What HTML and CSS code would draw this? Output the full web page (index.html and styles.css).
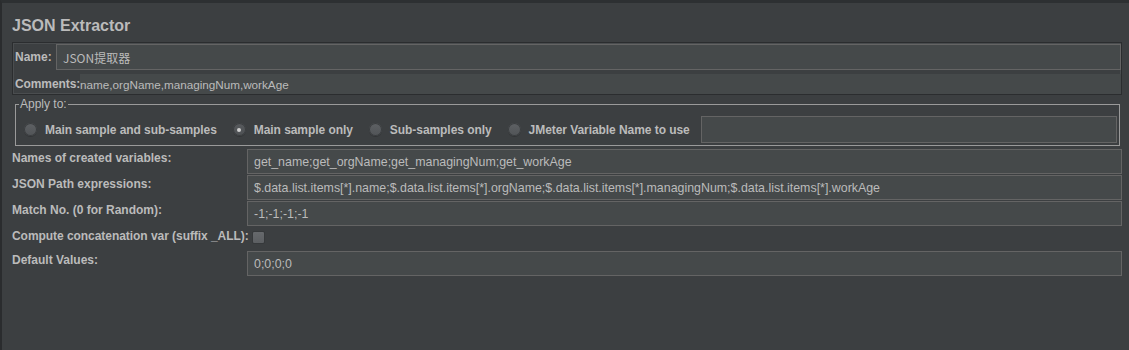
FILE: index.html
```html
<!DOCTYPE html>
<html lang="en">
<head>
<meta charset="utf-8">
<title>JSON Extractor</title>
<link rel="stylesheet" href="styles.css">
</head>
<body>
<div class="frame">
  <h1 class="title">JSON Extractor</h1>

  <div class="name-panel">
    <div class="name-row">
      <span class="label">Name:</span>
      <div class="field name-field">JSON提取器</div>
    </div>
    <div class="comments-row">
      <span class="label">Comments:</span>
      <div class="comments-field">name,orgName,managingNum,workAge</div>
    </div>
  </div>

  <fieldset class="apply">
    <legend class="apply-legend">Apply to:</legend>
    <div class="radio-row">
      <label class="option"><span class="radio"></span><span class="label">Main sample and sub-samples</span></label>
      <label class="option"><span class="radio checked"></span><span class="label">Main sample only</span></label>
      <label class="option"><span class="radio"></span><span class="label">Sub-samples only</span></label>
      <label class="option"><span class="radio"></span><span class="label">JMeter Variable Name to use</span></label>
      <div class="field var-field"></div>
    </div>
  </fieldset>

  <div class="form-grid">
    <span class="label row-label">Names of created variables:</span>
    <div class="field">get_name;get_orgName;get_managingNum;get_workAge</div>

    <span class="label row-label">JSON Path expressions:</span>
    <div class="field">$.data.list.items[*].name;$.data.list.items[*].orgName;$.data.list.items[*].managingNum;$.data.list.items[*].workAge</div>

    <span class="label row-label">Match No. (0 for Random):</span>
    <div class="field">-1;-1;-1;-1</div>

    <span class="label row-label tight">Compute concatenation var (suffix _ALL):</span>
    <div class="check-cell"><span class="checkbox"></span></div>

    <span class="label row-label">Default Values:</span>
    <div class="field">0;0;0;0</div>
  </div>
</div>
</body>
</html>
```

FILE: styles.css
```css
* {
  box-sizing: border-box;
}

html, body {
  margin: 0;
  padding: 0;
  background: #3c3f41;
}

body {
  font-family: "Liberation Sans", Arial, sans-serif;
  font-size: 12px;
  color: #bbbbbb;
}

.frame {
  min-height: 350px;
  border-top: 3px solid #2d3032;
  border-left: 2px solid #2a2c2e;
  padding: 13px 7px 0 10px;
}

.title {
  margin: 0 0 7px 0;
  font-size: 16px;
  line-height: 19px;
  font-weight: bold;
  color: #bbbbbb;
}

.label {
  font-weight: bold;
  line-height: 14px;
  white-space: nowrap;
}

.tight {
  letter-spacing: -0.05px;
}

/* Name / comments panel */
.name-panel {
  border: 1px solid #2b2d2f;
  box-shadow: inset 0 0 0 1px #4a4d4f;
  padding: 1px 0 0 2px;
  display: flex;
  flex-direction: column;
  gap: 4px;
}

.name-row {
  display: flex;
  align-items: center;
  height: 26px;
}

.name-row .label {
  width: 41px;
}

.field {
  background: #45494a;
  border: 1px solid #646464;
  height: 25px;
  padding: 0 6px;
  display: flex;
  align-items: center;
  white-space: nowrap;
  overflow: hidden;
  color: #bbbbbb;
  font-size: 12.4px;
}

.name-field {
  flex: 1;
  height: 26px;
  font-family: "Noto Sans CJK SC", "Liberation Sans", sans-serif;
  font-size: 12px;
}

.comments-row {
  display: flex;
  align-items: center;
  height: 20px;
}

.comments-row .label {
  letter-spacing: -0.1px;
}

.comments-field {
  flex: 1;
  height: 20px;
  background: #45494a;
  display: flex;
  align-items: center;
  white-space: nowrap;
  font-size: 11.7px;
}

/* Apply to fieldset */
.apply {
  margin: 2px 2px 0 3px;
  padding: 4px 2px 2px 3px;
  border: 1px solid #9a9a9a;
  min-width: 0;
}

.apply-legend {
  padding: 0 1px;
  line-height: 15px;
  font-size: 12px;
  color: #bbbbbb;
}

.radio-row {
  display: flex;
  align-items: center;
  gap: 16px;
  padding-left: 5px;
}

.option {
  display: flex;
  align-items: center;
  gap: 8px;
}

.option .label {
  letter-spacing: -0.06px;
}

.radio {
  width: 13px;
  height: 13px;
  border-radius: 50%;
  background: linear-gradient(#5e6164, #515457);
  box-shadow: inset 0 0 0 1px #3a3d3f, 0 1px 0 #333537;
  display: flex;
  align-items: center;
  justify-content: center;
  flex: none;
}

.radio.checked {
  background: linear-gradient(#585b5e, #4c4f52);
}

.radio.checked::after {
  content: "";
  width: 4px;
  height: 4px;
  border-radius: 50%;
  background: #cfcfcf;
}

.var-field {
  flex: 1;
  height: 27px;
  margin-left: -5px;
}

/* Form grid */
.form-grid {
  margin-top: 3px;
  display: grid;
  grid-template-columns: 235px 1fr;
  grid-template-rows: 25px 25px 25px 23px 25px;
  row-gap: 1px;
}

.row-label {
  padding-top: 2px;
}

.check-cell {
  padding: 4px 0 0 5px;
}

.checkbox {
  display: block;
  width: 13px;
  height: 13px;
  border-radius: 2px;
  border: 1px solid #36393b;
  background: linear-gradient(#66696c, #5c5f62);
}
```
